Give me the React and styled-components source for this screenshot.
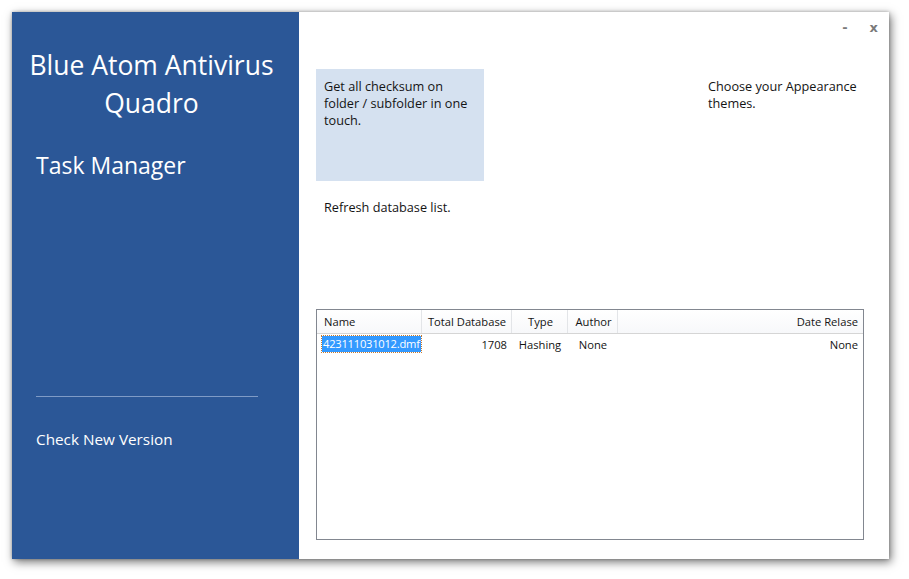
import React from "react";
import styled, { createGlobalStyle } from "styled-components";

const Global = createGlobalStyle`
  html, body { margin: 0; padding: 0; background: #ffffff; }
  body { font-family: "Open Sans", "Noto Sans", sans-serif; }
`;

const Page = styled.div`
  padding: 12px;
  width: 909px;
  height: 579px;
  box-sizing: border-box;
`;

const Window = styled.div`
  display: flex;
  width: 877px;
  height: 547px;
  background: #fdfdfd;
  box-shadow: 2px 3px 9px rgba(0, 0, 0, 0.55), 0 0 3px rgba(0, 0, 0, 0.25);
`;

const Sidebar = styled.aside`
  width: 287px;
  flex: none;
  background: #2b5797;
  color: #ffffff;
  display: flex;
  flex-direction: column;
  padding: 34px 0 0 0;
  box-sizing: border-box;
`;

const AppTitle = styled.h1`
  margin: 0;
  padding: 0 18px 0 10px;
  font-weight: 400;
  font-size: 26.5px;
  line-height: 38px;
  text-align: center;
  white-space: nowrap;
`;

const Section = styled.div`
  margin: 27px 0 0 24px;
  font-size: 23px;
  line-height: 32px;
`;

const Spacer = styled.div`
  flex: 1;
`;

const Divider = styled.hr`
  margin: 0 0 0 24px;
  border: none;
  height: 1px;
  background: #7f9bc6;
  width: 222px;
`;

const SideLink = styled.div`
  margin: 32px 0 110px 24px;
  font-size: 15.3px;
  line-height: 20px;
`;

const Main = styled.main`
  flex: 1;
  display: flex;
  flex-direction: column;
  padding: 0 25px 19px 17px;
  min-width: 0;
  background: #ffffff;
`;

const TitleBar = styled.div`
  height: 57px;
  display: flex;
  justify-content: flex-end;
  align-items: flex-start;
  gap: 22px;
  padding: 8px 0 0 0;
  box-sizing: border-box;
  margin-right: -14px;
`;

const WinButton = styled.span`
  font-family: "DejaVu Sans", sans-serif;
  font-size: 13px;
  font-weight: 700;
  color: #7a7a7a;
  line-height: 16px;
`;

const Tiles = styled.div`
  display: grid;
  grid-template-columns: repeat(3, 168px);
  grid-template-rows: 112px 112px;
  column-gap: 24px;
  row-gap: 9px;
`;

const Tile = styled.div`
  background: ${(p) => (p.$active ? "#d5e1f0" : "transparent")};
  padding: 9px 8px 8px 8px;
  box-sizing: border-box;
  font-size: 12.7px;
  line-height: 17px;
  color: #141414;
`;

const TableBox = styled.div`
  margin-top: 7px;
  flex: 1;
  border: 1px solid #828790;
  background: #ffffff;
  font-size: 11.2px;
  color: #141414;
`;

const HeaderRow = styled.div`
  display: grid;
  grid-template-columns: 105px 90px 56px 50px 1fr;
  height: 23px;
  border-bottom: 1px solid #d5d5d5;
  background: linear-gradient(#ffffff, #f7f8fa);
`;

const HeadCell = styled.div`
  display: flex;
  align-items: center;
  justify-content: ${(p) => p.$align || "flex-start"};
  padding: 0 5px 0 7px;
  border-right: ${(p) => (p.$last ? "none" : "1px solid #e3e5e8")};
  white-space: nowrap;
  overflow: hidden;
`;

const DataRow = styled.div`
  display: grid;
  grid-template-columns: 105px 90px 56px 50px 1fr;
  height: 20px;
  align-items: center;
`;

const Cell = styled.div`
  display: flex;
  justify-content: ${(p) => p.$align || "flex-start"};
  padding: 0 5px 0 5px;
  white-space: nowrap;
`;

const Selected = styled.span`
  background: #3399ff;
  color: #ffffff;
  padding: 0 1px;
  letter-spacing: -0.25px;
  outline: 1px dotted #c77a2e;
  line-height: 16px;
`;

const columns = [
  { label: "Name" },
  { label: "Total Database", align: "flex-end" },
  { label: "Type", align: "center" },
  { label: "Author", align: "center" },
  { label: "Date Relase", align: "flex-end", last: true },
];

const rows = [
  { name: "423111031012.dmf", total: "1708", type: "Hashing", author: "None", date: "None" },
];

export default function App() {
  return (
    <>
      <Global />
      <Page>
        <Window>
          <Sidebar>
            <AppTitle>
              Blue Atom Antivirus
              <br />
              Quadro
            </AppTitle>
            <Section>Task Manager</Section>
            <Spacer />
            <Divider />
            <SideLink>Check New Version</SideLink>
          </Sidebar>
          <Main>
            <TitleBar>
              <WinButton>-</WinButton>
              <WinButton>x</WinButton>
            </TitleBar>
            <Tiles>
              <Tile $active>Get all checksum on folder / subfolder in one touch.</Tile>
              <Tile />
              <Tile>Choose your Appearance themes.</Tile>
              <Tile>Refresh database list.</Tile>
            </Tiles>
            <TableBox>
              <HeaderRow>
                {columns.map((c) => (
                  <HeadCell key={c.label} $align={c.align} $last={c.last}>
                    {c.label}
                  </HeadCell>
                ))}
              </HeaderRow>
              {rows.map((r) => (
                <DataRow key={r.name}>
                  <Cell>
                    <Selected>{r.name}</Selected>
                  </Cell>
                  <Cell $align="flex-end">{r.total}</Cell>
                  <Cell $align="center">{r.type}</Cell>
                  <Cell $align="center">{r.author}</Cell>
                  <Cell $align="flex-end">{r.date}</Cell>
                </DataRow>
              ))}
            </TableBox>
          </Main>
        </Window>
      </Page>
    </>
  );
}
